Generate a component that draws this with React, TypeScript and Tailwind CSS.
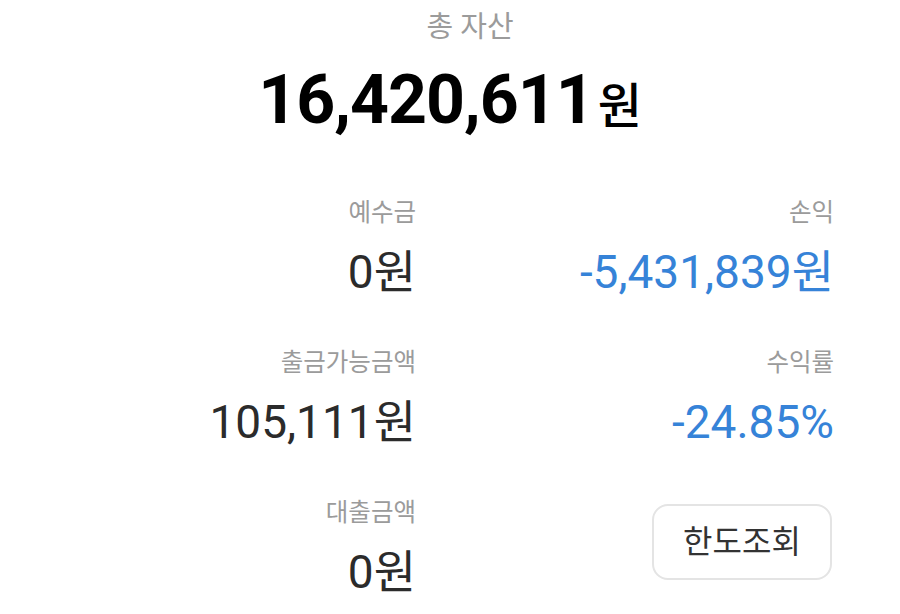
import React from "react";

const Label = ({ children }: { children: React.ReactNode }) => (
	<p className="text-[24.5px] leading-[30px] text-[#9b9b9b]">{children}</p>
);

const Value = ({ children, blue }: { children: React.ReactNode; blue?: boolean }) => (
	<p className={`text-[46px] leading-[56px] mt-[16px] ${blue ? "text-[#3683d8]" : "text-[#2b2b2b]"}`}>
		{children}
	</p>
);

const App = () => {
	return (
		<div className="w-[900px] h-[614px] bg-white overflow-hidden font-['Roboto','Noto_Sans_CJK_KR',sans-serif]">
			<p className="text-center text-[29px] leading-[34px] pt-[10px] pl-[40px] text-[#9b9b9b]">총 자산</p>
			<p className="text-center mt-[18px] leading-[76px] text-black">
				<span className="text-[68px] font-bold tracking-[-1px]">16,420,611</span>
				<span className="text-[48px] font-medium ml-[4px]">원</span>
			</p>

			<div className="grid grid-cols-[416px_418px] mt-[42px] text-right">
				<div className="flex flex-col items-end">
					<Label>예수금</Label>
					<Value>0원</Value>
				</div>
				<div className="flex flex-col items-end">
					<Label>손익</Label>
					<Value blue>-5,431,839원</Value>
				</div>

				<div className="flex flex-col items-end mt-[48px]">
					<Label>출금가능금액</Label>
					<Value>105,111원</Value>
				</div>
				<div className="flex flex-col items-end mt-[48px]">
					<Label>수익률</Label>
					<Value blue>-24.85%</Value>
				</div>

				<div className="flex flex-col items-end mt-[48px]">
					<Label>대출금액</Label>
					<Value>0원</Value>
				</div>
				<div className="flex justify-end mt-[54px]">
					<button className="w-[180px] h-[76px] mr-[2px] rounded-[16px] border-2 border-[#e4e4e4] text-[32px] text-[#333]">
						한도조회
					</button>
				</div>
			</div>
		</div>
	);
};

export default App;
